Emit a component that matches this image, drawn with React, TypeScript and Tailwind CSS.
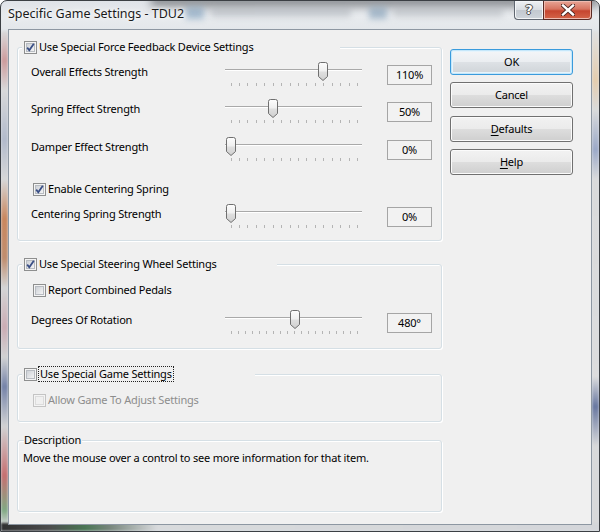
import React from "react";

function Check({ checked = false, disabled = false }: { checked?: boolean; disabled?: boolean }) {
  return (
    <svg width="13" height="13" viewBox="0 0 13 13" className="shrink-0">
      <defs>
        <linearGradient id="cbIn" x1="0" y1="0" x2="1" y2="1">
          <stop offset="0" stopColor="#cbcfd5" />
          <stop offset="1" stopColor="#f6f6f6" />
        </linearGradient>
      </defs>
      <rect x="0.5" y="0.5" width="12" height="12" fill="#f4f4f4" stroke={disabled ? "#c4c4c4" : "#8e8f8f"} />
      <rect x="2.5" y="2.5" width="8" height="8" fill={disabled ? "#f0f0f0" : "url(#cbIn)"} stroke={disabled ? "#dcdcdc" : "#b8bcc2"} />
      {checked && (
        <path d="M3.2 6.6 L5.3 9.2 L9.8 2.8" fill="none" stroke="#3a4f86" strokeWidth="1.8" strokeLinejoin="miter" />
      )}
    </svg>
  );
}

function Slider({ frac, ticks }: { frac: number; ticks: number }) {
  const t0 = 5.5;
  const t1 = 132;
  const cx = t0 + frac * (t1 - t0);
  const tickXs = Array.from({ length: ticks }, (_, i) => Math.round(t0 + (i * (t1 - t0)) / (ticks - 1)) + 0.5);
  const x = Math.round(cx - 5);
  return (
    <svg width="137" height="26" viewBox="0 0 137 26" className="shrink-0">
      <defs>
        <linearGradient id="thumbG" x1="0" y1="0" x2="0" y2="1">
          <stop offset="0" stopColor="#fdfdfd" />
          <stop offset="0.45" stopColor="#f0f0f0" />
          <stop offset="0.55" stopColor="#dedede" />
          <stop offset="1" stopColor="#cfcfcf" />
        </linearGradient>
      </defs>
      <rect x="0" y="7" width="137" height="1" fill="#a9a9a9" />
      <rect x="0" y="8" width="137" height="1" fill="#ffffff" />
      {tickXs.map((tx, i) => (
        <line key={i} x1={tx} y1="21" x2={tx} y2="24" stroke="#b4b4b4" strokeWidth="1" />
      ))}
      <path
        d={`M${x + 0.5} 2.5 Q${x + 0.5} 0.5 ${x + 2.5} 0.5 H${x + 7.5} Q${x + 9.5} 0.5 ${x + 9.5} 2.5 V14.5 L${x + 5} 18.5 L${x + 0.5} 14.5 Z`}
        fill="url(#thumbG)"
        stroke="#6f6f6f"
      />
    </svg>
  );
}

function SliderRow({ label, value, frac, ticks }: { label: string; value: string; frac: number; ticks: number }) {
  return (
    <div className="flex h-[26px] items-start">
      <div className="w-[194px] pt-[2px] leading-[16px]">{label}</div>
      <Slider frac={frac} ticks={ticks} />
      <div className="ml-[25px] mt-[3px] flex h-[20px] w-[45px] items-center justify-center border border-[#a5a5a5] bg-[#f2f2f2] leading-[16px]">
        {value}
      </div>
    </div>
  );
}

function CheckRow({ label, checked, disabled }: { label: string; checked?: boolean; disabled?: boolean }) {
  return (
    <div className="flex h-[16px] items-center gap-[2px] pl-[2px]">
      <Check checked={checked} disabled={disabled} />
      <span className={`leading-[16px] ${disabled ? "text-[#8d8d8d]" : ""}`}>{label}</span>
    </div>
  );
}

function Group({
  legend,
  legendWidth,
  height,
  className = "",
  children,
}: {
  legend: React.ReactNode;
  legendWidth: string;
  height: string;
  className?: string;
  children: React.ReactNode;
}) {
  return (
    <div className={`relative rounded-[3px] border border-[#d5dfe5] shadow-[inset_1px_1px_0_#ffffff,1px_1px_0_#ffffff] ${height} ${className}`}>
      <div className={`absolute left-[4px] -top-[9px] flex h-[16px] items-center bg-[#f0f0f0] pl-[2px] ${legendWidth}`}>{legend}</div>
      {children}
    </div>
  );
}

function Btn({ children, focused = false, className = "" }: { children: React.ReactNode; focused?: boolean; className?: string }) {
  return (
    <div
      className={`flex h-[26px] w-[123px] items-center justify-center rounded-[3px] border leading-[16px] ${
        focused
          ? "border-[#3a9bdc] bg-[linear-gradient(180deg,#f4f6f8_0%,#ebeef1_48%,#dde1e5_52%,#cfd4d8_100%)] shadow-[inset_0_0_0_1px_#c5e7fa,inset_0_0_0_2px_#e6f4fc]"
          : "border-[#707070] bg-[linear-gradient(180deg,#f2f2f2_0%,#ebebeb_48%,#dddddd_52%,#cfcfcf_100%)] shadow-[inset_0_0_0_1px_#fbfbfb]"
      } ${className}`}
    >
      {children}
    </div>
  );
}

export default function App() {
  return (
    <div className="relative h-[532px] w-[600px] overflow-hidden rounded-t-[7px] border border-[#3b3f44] bg-[linear-gradient(180deg,#dfe3e8_0%,#e8ebee_3%,#e2e6ea_6%,#d9dee4_100%)] font-['Noto_Sans',sans-serif] text-[11px] tracking-[-0.2px] text-black">
      {/* blurred desktop seen through the glass frame */}
      <div className="pointer-events-none absolute -top-[6px] left-[150px] right-0 h-[12px] bg-[#6b6e72] opacity-70 blur-[4px]" />
      <div className="pointer-events-none absolute top-[6px] left-[185px] h-[12px] w-[18px] bg-[#7a9cba] opacity-60 blur-[3px]" />
      <div className="pointer-events-none absolute top-[7px] left-[210px] h-[9px] w-[140px] bg-[#9aa0a8] opacity-40 blur-[3px]" />
      <div className="pointer-events-none absolute top-[6px] left-[368px] h-[12px] w-[18px] bg-[#7d9ab4] opacity-60 blur-[3px]" />
      <div className="pointer-events-none absolute top-[7px] left-[392px] h-[9px] w-[110px] bg-[#a2a7ad] opacity-40 blur-[3px]" />
      <div className="pointer-events-none absolute left-0 top-[30px] h-[494px] w-[7px] bg-[linear-gradient(180deg,#d8d8d8_0%,#c98a8a_6%,#d6d6d6_12%,#a7b0c4_22%,#d4d4d4_30%,#c4703c_38%,#b97a52_46%,#d2d2d2_52%,#c7a0a8_60%,#cfcfcf_66%,#5d6d9a_72%,#cfcfcf_80%,#c25555_90%,#6c9d6c_97%,#d0d0d0_100%)] opacity-80 blur-[1px]" />
      <div className="pointer-events-none absolute right-0 top-[30px] h-[494px] w-[7px] bg-[linear-gradient(180deg,#e0e0e0_0%,#e6c8a0_10%,#d8d8d8_16%,#8b9bc0_24%,#d8d8d8_30%,#dcdcdc_70%,#4d5f90_76%,#d8d8d8_84%,#d8d8d8_100%)] opacity-80 blur-[1px]" />
      <div className="pointer-events-none absolute bottom-0 left-0 h-[8px] w-[600px] bg-[linear-gradient(90deg,#1e1e1e_0%,#3d3d3d_8%,#3b6b45_14%,#6c7c70_18%,#d8dadc_26%,#d4d6d9_100%)] opacity-90 blur-[1px]" />

      <div className="relative flex h-[531px] flex-col">
        {/* Title bar */}
        <div className="flex h-[28px] items-start">
          <div className="ml-[7px] mt-[4px] text-[12.5px] leading-[18px] tracking-normal text-[#1a1a1a] [text-shadow:0_0_6px_#ffffff,0_0_3px_#ffffff]">
            Specific Game Settings - TDU2
          </div>
          <div className="ml-auto mr-[7px] flex h-[19px]">
            <div className="flex w-[29px] items-center justify-center rounded-bl-[4px] border border-r-0 border-t-0 border-[#5f6670] bg-[linear-gradient(180deg,#eef1f4_0%,#d9dde2_48%,#c3c9d0_52%,#cfd5db_100%)] shadow-[inset_0_0_0_1px_#f4f6f8]">
              <span className="font-['DejaVu_Sans',sans-serif] text-[13px] font-bold leading-[14px] text-white [text-shadow:0_0_1px_#333,1px_0_0_#555,-1px_0_0_#555,0_1px_0_#555,0_-1px_0_#555]">?</span>
            </div>
            <div className="flex w-[49px] items-center justify-center rounded-br-[4px] border border-t-0 border-[#5a2a24] bg-[linear-gradient(180deg,#e8a596_0%,#d77460_45%,#c6452f_55%,#d4654a_100%)] shadow-[inset_0_0_0_1px_#eebbb0]">
              <svg width="14" height="12" viewBox="0 0 14 12">
                <path d="M2 1.5 L12 10.5 M12 1.5 L2 10.5" stroke="#4a2420" strokeWidth="4.2" strokeLinecap="square" />
                <path d="M2 1.5 L12 10.5 M12 1.5 L2 10.5" stroke="#ffffff" strokeWidth="2.4" strokeLinecap="square" />
              </svg>
            </div>
          </div>
        </div>

        {/* Client area */}
        <div className="mx-[7px] flex h-[496px] items-start border border-[#8d97a2] bg-[#f0f0f0]">
          <div className="ml-[8px] flex w-[425px] flex-col">
            <Group
              className="mt-[17px]"
              height="h-[194px]"
              legendWidth="w-[318px]"
              legend={
                <div className="flex items-center gap-[2px]">
                  <Check checked />
                  <span className="leading-[16px]">Use Special Force Feedback Device Settings</span>
                </div>
              }
            >
              <div className="flex flex-col pl-[13px] pt-[14px]">
                <SliderRow label="Overall Effects Strength" value="110%" frac={110 / 150} ticks={16} />
                <div className="mt-[11px]">
                  <SliderRow label="Spring Effect Strength" value="50%" frac={50 / 150} ticks={16} />
                </div>
                <div className="mt-[12px]">
                  <SliderRow label="Damper Effect Strength" value="0%" frac={0} ticks={16} />
                </div>
                <div className="mt-[18px]">
                  <CheckRow label="Enable Centering Spring" checked />
                </div>
                <div className="mt-[7px]">
                  <SliderRow label="Centering Spring Strength" value="0%" frac={0} ticks={16} />
                </div>
              </div>
            </Group>

            <Group
              className="mt-[23px]"
              height="h-[85px]"
              legendWidth="w-[255px]"
              legend={
                <div className="flex items-center gap-[2px]">
                  <Check checked />
                  <span className="leading-[16px]">Use Special Steering Wheel Settings</span>
                </div>
              }
            >
              <div className="flex flex-col pl-[13px] pt-[17px]">
                <CheckRow label="Report Combined Pedals" />
                <div className="mt-[12px]">
                  <SliderRow label="Degrees Of Rotation" value="480°" frac={(480 - 40) / 860} ticks={19} />
                </div>
              </div>
            </Group>

            <Group
              className="mt-[25px]"
              height="h-[48px]"
              legendWidth="w-[233px]"
              legend={
                <div className="flex items-center gap-[1px]">
                  <Check />
                  <span className="border border-dotted border-[#222] px-[1px] leading-[14px]">Use Special Game Settings</span>
                </div>
              }
            >
              <div className="flex flex-col pl-[13px] pt-[17px]">
                <CheckRow label="Allow Game To Adjust Settings" disabled />
              </div>
            </Group>

            <div className="relative mt-[18px] h-[72px] rounded-[3px] border border-[#d5dfe5] shadow-[inset_1px_1px_0_#ffffff,1px_1px_0_#ffffff]">
              <div className="absolute left-[6px] -top-[9px] h-[16px] bg-[#f0f0f0] pr-[1px] leading-[16px]">Description</div>
              <div className="pl-[5px] pt-[9px] leading-[16px]">
                Move the mouse over a control to see more information for that item.
              </div>
            </div>
          </div>

          <div className="ml-[8px] mt-[19px] flex w-[123px] flex-col">
            <Btn focused>OK</Btn>
            <Btn className="mt-[7px]">Cancel</Btn>
            <Btn className="mt-[8px]">
              <span>
                <span className="underline underline-offset-2">D</span>efaults
              </span>
            </Btn>
            <Btn className="mt-[7px]">
              <span>
                <span className="underline underline-offset-2">H</span>elp
              </span>
            </Btn>
          </div>
        </div>
      </div>
    </div>
  );
}
